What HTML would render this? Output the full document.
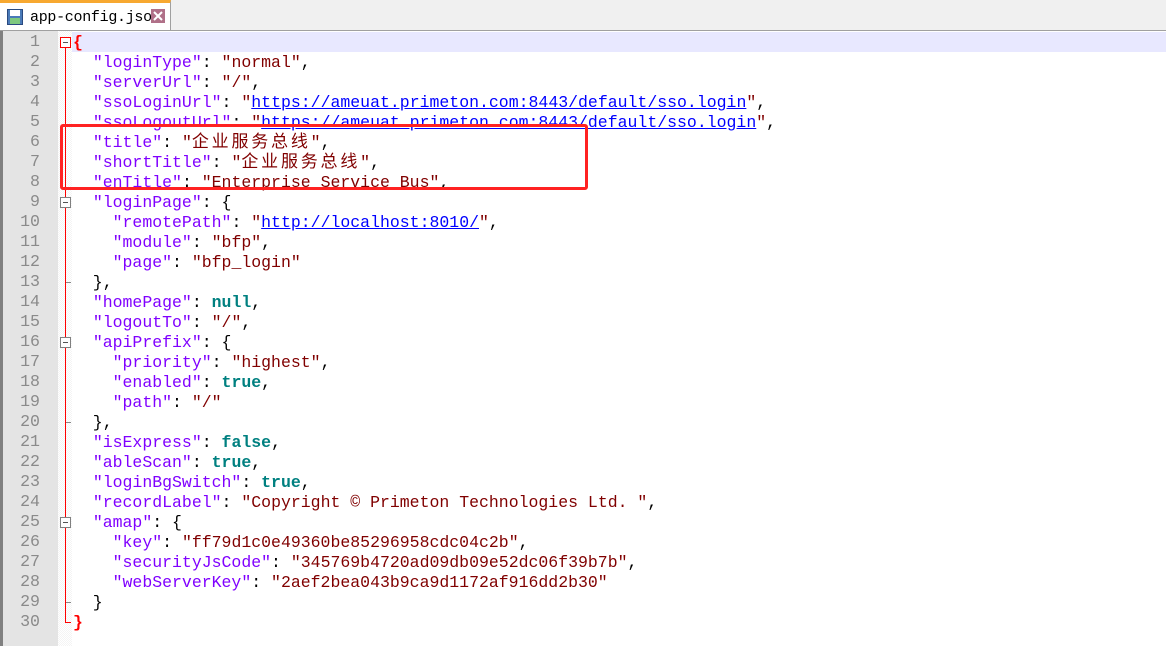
<!DOCTYPE html>
<html><head><meta charset="utf-8"><style>
body{margin:0;width:1166px;height:646px;overflow:hidden;background:#fff;position:relative;font-family:"Liberation Mono","Noto Sans CJK SC",monospace}
.tabbar{position:absolute;left:0;top:0;width:1166px;height:30px;background:#f0f0f0;border-bottom:1px solid #a0a0a0}
.tab{position:absolute;left:0;top:0;width:171px;height:30px;background:#fff;border-right:1px solid #a0a0a0;border-top:3px solid #f7a830;box-sizing:border-box}
.tab span{position:absolute;left:30px;top:6px;font-size:15px;color:#000;font-family:"Liberation Mono",monospace;letter-spacing:-0.3px}
.gut{position:absolute;left:0;top:31px;width:58px;height:615px;background:#e4e4e4;border-left:3px solid #808080;box-sizing:border-box}
.fold{position:absolute;left:58px;top:31px;width:14px;height:615px;background:repeating-conic-gradient(#f4f4f4 0 25%,#fff 0 50%) 0 0/2px 2px}
.hl{position:absolute;left:72px;top:32px;width:1094px;height:20px;background:#e8e8ff}
.ln{position:absolute;left:0;width:40px;text-align:right;font-size:16.6px;color:#8a8a8a;line-height:20px}
.code{position:absolute;left:73px;top:33px;font-size:16.5px;line-height:20px;white-space:pre;color:#000}
.code div{height:20px}
.k{color:#8000ff}.s{color:#800000}.u{color:#0000ff;text-decoration:underline}.b{color:#008080;font-weight:bold}.r{color:#f00;font-weight:bold}
.c{font-size:17px;letter-spacing:2.8px;line-height:0}
.box{position:absolute;width:9px;height:9px;border:1px solid #808080;background:#fff}
.box:after{content:"";position:absolute;left:2px;top:4px;width:5px;height:1px;background:#555}
.vl{position:absolute;width:1px;background:#f00}
.red{position:absolute;left:60px;top:124px;width:528px;height:66px;border:3px solid #f22;border-radius:3px;box-sizing:border-box}
</style></head><body>
<div class="tabbar"><div class="tab">
<svg style="position:absolute;left:7px;top:6px" width="16" height="16" viewBox="0 0 16 16"><rect x="0.5" y="0.5" width="15" height="15" fill="#4a7ab8" stroke="#2a4a80"/><rect x="3" y="1" width="10" height="6" fill="#fff"/><rect x="3" y="9" width="10" height="6" fill="#7fc97f"/></svg>
<span>app-config.json</span>
<svg style="position:absolute;left:151px;top:6px" width="14" height="14"><rect width="14" height="14" fill="#b07088"/><path d="M3 3L11 11M11 3L3 11" stroke="#fff" stroke-width="2"/></svg>
</div></div>
<div class="gut"></div><div class="fold"></div><div class="hl"></div>
<div class="vl" style="left:65px;top:47px;height:576px"></div>
<div style="position:absolute;left:65px;top:622px;width:6px;height:1px;background:#f00"></div>
<div style="position:absolute;left:66px;top:282px;width:5px;height:1px;background:#888"></div>
<div style="position:absolute;left:66px;top:422px;width:5px;height:1px;background:#888"></div>
<div style="position:absolute;left:66px;top:602px;width:5px;height:1px;background:#888"></div>
<div class="box" style="left:60px;top:37px;border-color:#f00"></div>
<div class="box" style="left:60px;top:197px"></div>
<div class="box" style="left:60px;top:337px"></div>
<div class="box" style="left:60px;top:517px"></div>
<div class="code"><div><span class="r">{</span></div><div>  <span class="k">"loginType"</span>: <span class="s">"normal"</span>,</div><div>  <span class="k">"serverUrl"</span>: <span class="s">"/"</span>,</div><div>  <span class="k">"ssoLoginUrl"</span>: <span class="s">"</span><span class="u">https://ameuat.primeton.com:8443/default/sso.login</span><span class="s">"</span>,</div><div>  <span class="k">"ssoLogoutUrl"</span>: <span class="s">"</span><span class="u">https://ameuat.primeton.com:8443/default/sso.login</span><span class="s">"</span>,</div><div>  <span class="k">"title"</span>: <span class="s">"<span class="c">企业服务总线</span>"</span>,</div><div>  <span class="k">"shortTitle"</span>: <span class="s">"<span class="c">企业服务总线</span>"</span>,</div><div>  <span class="k">"enTitle"</span>: <span class="s">"Enterprise Service Bus"</span>,</div><div>  <span class="k">"loginPage"</span>: {</div><div>    <span class="k">"remotePath"</span>: <span class="s">"</span><span class="u">http://localhost:8010/</span><span class="s">"</span>,</div><div>    <span class="k">"module"</span>: <span class="s">"bfp"</span>,</div><div>    <span class="k">"page"</span>: <span class="s">"bfp_login"</span></div><div>  },</div><div>  <span class="k">"homePage"</span>: <span class="b">null</span>,</div><div>  <span class="k">"logoutTo"</span>: <span class="s">"/"</span>,</div><div>  <span class="k">"apiPrefix"</span>: {</div><div>    <span class="k">"priority"</span>: <span class="s">"highest"</span>,</div><div>    <span class="k">"enabled"</span>: <span class="b">true</span>,</div><div>    <span class="k">"path"</span>: <span class="s">"/"</span></div><div>  },</div><div>  <span class="k">"isExpress"</span>: <span class="b">false</span>,</div><div>  <span class="k">"ableScan"</span>: <span class="b">true</span>,</div><div>  <span class="k">"loginBgSwitch"</span>: <span class="b">true</span>,</div><div>  <span class="k">"recordLabel"</span>: <span class="s">"Copyright © Primeton Technologies Ltd. "</span>,</div><div>  <span class="k">"amap"</span>: {</div><div>    <span class="k">"key"</span>: <span class="s">"ff79d1c0e49360be85296958cdc04c2b"</span>,</div><div>    <span class="k">"securityJsCode"</span>: <span class="s">"345769b4720ad09db09e52dc06f39b7b"</span>,</div><div>    <span class="k">"webServerKey"</span>: <span class="s">"2aef2bea043b9ca9d1172af916dd2b30"</span></div><div>  }</div><div><span class="r">}</span></div></div>
<div class="red"></div>
<div style="position:absolute;left:0;top:32px">
<div class="ln" style="position:static">1<br>2<br>3<br>4<br>5<br>6<br>7<br>8<br>9<br>10<br>11<br>12<br>13<br>14<br>15<br>16<br>17<br>18<br>19<br>20<br>21<br>22<br>23<br>24<br>25<br>26<br>27<br>28<br>29<br>30</div>
</div>
</body></html>
